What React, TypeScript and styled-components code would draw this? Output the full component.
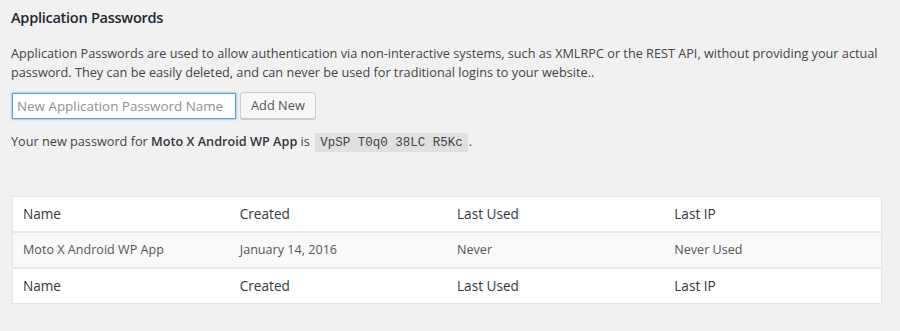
import React from "react";
import styled, { createGlobalStyle } from "styled-components";

const Global = createGlobalStyle`
  html, body { margin: 0; padding: 0; background: #f1f1f1; }
  body { font-family: "Open Sans", "Liberation Sans", sans-serif; font-size: 12.7px; color: #444; }
`;

const Page = styled.div`
  padding: 4px 18px 0 11px;
`;

const Heading = styled.h2`
  margin: 0 0 14px;
  font-size: 14.6px;
  font-weight: 600;
  letter-spacing: -0.3px;
  line-height: 26px;
  color: #23282d;
`;

const Intro = styled.p`
  margin: 0 0 10px;
  font-size: 12.7px;
  line-height: 19px;
`;

const FormRow = styled.div`
  display: flex;
  align-items: center;
  gap: 4px;
  margin-left: 1px;
`;

const NameInput = styled.input`
  box-sizing: border-box;
  width: 224px;
  height: 26px;
  margin: 0;
  padding: 2px 4px;
  border: 1px solid #5b9dd9;
  box-shadow: 0 0 2px rgba(30, 140, 190, 0.8);
  background: #fff;
  font-family: "Open Sans", "Liberation Sans", sans-serif;
  font-size: 13.4px;
  color: #32373c;
  outline: none;
  &::placeholder { color: #8f9192; }
`;

const Button = styled.button`
  box-sizing: border-box;
  height: 27px;
  padding: 0 10px 1px;
  border: 1px solid #ccc;
  border-radius: 3px;
  background: #f7f7f7;
  box-shadow: 0 1px 0 #ccc;
  font-family: "Open Sans", "Liberation Sans", sans-serif;
  font-size: 12.8px;
  color: #555;
  cursor: pointer;
`;

const Notice = styled.p`
  margin: 13px 0 0;
  font-size: 12.7px;
  line-height: 19px;
  strong { font-weight: 600; color: #32373c; }
`;

const Code = styled.code`
  margin: 0 1px 0 2px;
  padding: 3px 5px 2px;
  background: rgba(0, 0, 0, 0.07);
  font-family: "Liberation Mono", monospace;
  font-size: 12.5px;
  color: #444;
`;

const Table = styled.table`
  box-sizing: border-box;
  width: 870px;
  margin: 43px 0 0 1px;
  border-collapse: collapse;
  table-layout: fixed;
  background: #fff;
  border: 1px solid #e5e5e5;
  box-shadow: 0 1px 1px rgba(0, 0, 0, 0.04);
`;

const HeadCell = styled.th`
  padding: 8px 10px;
  text-align: left;
  font-weight: 400;
  font-size: 13.6px;
  line-height: 18px;
  color: #32373c;
`;

const HeadRow = styled.tr<{ $foot?: boolean }>`
  ${(p) => (p.$foot ? "border-top: 2px solid #e8e8e8;" : "border-bottom: 2px solid #e8e8e8;")}
`;

const BodyRow = styled.tr`
  background: #f9f9f9;
`;

const Cell = styled.td`
  padding: 8px 10px;
  font-size: 12.6px;
  line-height: 18px;
  color: #555;
`;

const columns = ["Name", "Created", "Last Used", "Last IP"];

export default function App() {
  return (
    <>
      <Global />
      <Page>
        <Heading>Application Passwords</Heading>
        <Intro>
          Application Passwords are used to allow authentication via non-interactive systems, such as XMLRPC or the REST API, without providing your actual password. They can be easily deleted, and can never be used for traditional logins to your website..
        </Intro>
        <FormRow>
          <NameInput placeholder="New Application Password Name" />
          <Button>Add New</Button>
        </FormRow>
        <Notice>
          Your new password for <strong>Moto X Android WP App</strong> is <Code>VpSP T0q0 38LC R5Kc</Code>.
        </Notice>
        <Table>
          <thead>
            <HeadRow>
              {columns.map((c) => (
                <HeadCell key={c}>{c}</HeadCell>
              ))}
            </HeadRow>
          </thead>
          <tbody>
            <BodyRow>
              <Cell>Moto X Android WP App</Cell>
              <Cell>January 14, 2016</Cell>
              <Cell>Never</Cell>
              <Cell>Never Used</Cell>
            </BodyRow>
          </tbody>
          <tfoot>
            <HeadRow $foot>
              {columns.map((c) => (
                <HeadCell key={c}>{c}</HeadCell>
              ))}
            </HeadRow>
          </tfoot>
        </Table>
      </Page>
    </>
  );
}
